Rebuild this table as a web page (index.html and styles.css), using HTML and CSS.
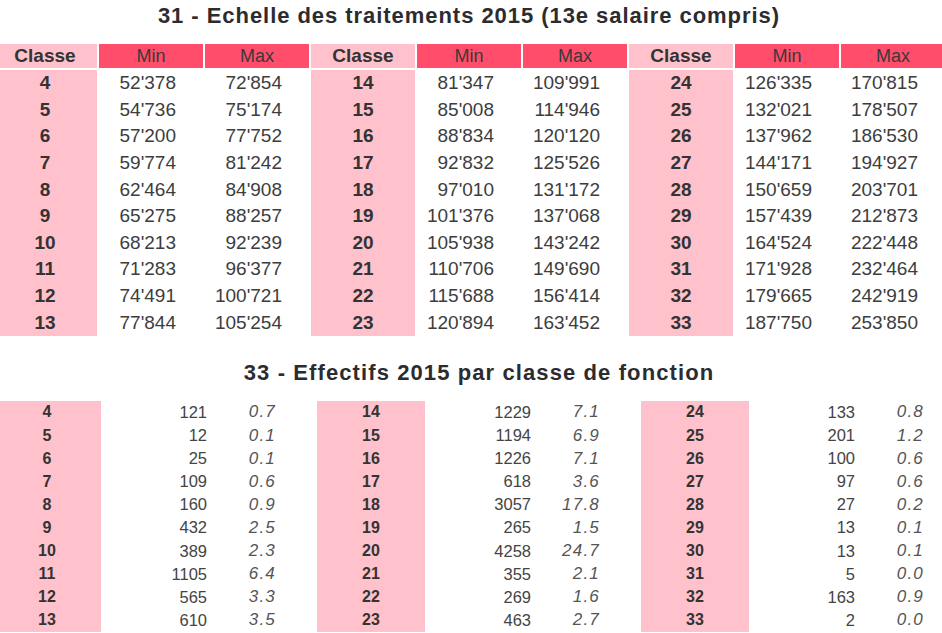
FILE: index.html
```html
<!DOCTYPE html>
<html lang="fr">
<head>
<meta charset="utf-8">
<title>Echelle des traitements 2015</title>
<link rel="stylesheet" href="styles.css">
</head>
<body>
<div class="page">
  <section class="salaires">
    <h1 class="title title-top">31 - Echelle des traitements 2015 (13e salaire compris)</h1>
    <div class="grid head">
      <div class="h-classe">Classe</div><div class="h-val">Min</div><div class="h-val">Max</div>
      <div class="h-classe">Classe</div><div class="h-val">Min</div><div class="h-val">Max</div>
      <div class="h-classe">Classe</div><div class="h-val">Min</div><div class="h-val">Max</div>
    </div>
    <div class="grid body">
      <div class="c">4</div><div class="n">52'378</div><div class="n">72'854</div><div class="c">14</div><div class="n">81'347</div><div class="n">109'991</div><div class="c">24</div><div class="n">126'335</div><div class="n">170'815</div>
      <div class="c">5</div><div class="n">54'736</div><div class="n">75'174</div><div class="c">15</div><div class="n">85'008</div><div class="n">114'946</div><div class="c">25</div><div class="n">132'021</div><div class="n">178'507</div>
      <div class="c">6</div><div class="n">57'200</div><div class="n">77'752</div><div class="c">16</div><div class="n">88'834</div><div class="n">120'120</div><div class="c">26</div><div class="n">137'962</div><div class="n">186'530</div>
      <div class="c">7</div><div class="n">59'774</div><div class="n">81'242</div><div class="c">17</div><div class="n">92'832</div><div class="n">125'526</div><div class="c">27</div><div class="n">144'171</div><div class="n">194'927</div>
      <div class="c">8</div><div class="n">62'464</div><div class="n">84'908</div><div class="c">18</div><div class="n">97'010</div><div class="n">131'172</div><div class="c">28</div><div class="n">150'659</div><div class="n">203'701</div>
      <div class="c">9</div><div class="n">65'275</div><div class="n">88'257</div><div class="c">19</div><div class="n">101'376</div><div class="n">137'068</div><div class="c">29</div><div class="n">157'439</div><div class="n">212'873</div>
      <div class="c">10</div><div class="n">68'213</div><div class="n">92'239</div><div class="c">20</div><div class="n">105'938</div><div class="n">143'242</div><div class="c">30</div><div class="n">164'524</div><div class="n">222'448</div>
      <div class="c">11</div><div class="n">71'283</div><div class="n">96'377</div><div class="c">21</div><div class="n">110'706</div><div class="n">149'690</div><div class="c">31</div><div class="n">171'928</div><div class="n">232'464</div>
      <div class="c">12</div><div class="n">74'491</div><div class="n">100'721</div><div class="c">22</div><div class="n">115'688</div><div class="n">156'414</div><div class="c">32</div><div class="n">179'665</div><div class="n">242'919</div>
      <div class="c">13</div><div class="n">77'844</div><div class="n">105'254</div><div class="c">23</div><div class="n">120'894</div><div class="n">163'452</div><div class="c">33</div><div class="n">187'750</div><div class="n">253'850</div>
    </div>
  </section>

  <section class="effectifs">
    <h2 class="title title-bottom">33 - Effectifs 2015 par classe de fonction</h2>
    <div class="eff">
      <div class="ec">4</div><div class="en">121</div><div class="ep">0.7</div><div class="ec">14</div><div class="en">1229</div><div class="ep">7.1</div><div class="ec">24</div><div class="en">133</div><div class="ep">0.8</div>
      <div class="ec">5</div><div class="en">12</div><div class="ep">0.1</div><div class="ec">15</div><div class="en">1194</div><div class="ep">6.9</div><div class="ec">25</div><div class="en">201</div><div class="ep">1.2</div>
      <div class="ec">6</div><div class="en">25</div><div class="ep">0.1</div><div class="ec">16</div><div class="en">1226</div><div class="ep">7.1</div><div class="ec">26</div><div class="en">100</div><div class="ep">0.6</div>
      <div class="ec">7</div><div class="en">109</div><div class="ep">0.6</div><div class="ec">17</div><div class="en">618</div><div class="ep">3.6</div><div class="ec">27</div><div class="en">97</div><div class="ep">0.6</div>
      <div class="ec">8</div><div class="en">160</div><div class="ep">0.9</div><div class="ec">18</div><div class="en">3057</div><div class="ep">17.8</div><div class="ec">28</div><div class="en">27</div><div class="ep">0.2</div>
      <div class="ec">9</div><div class="en">432</div><div class="ep">2.5</div><div class="ec">19</div><div class="en">265</div><div class="ep">1.5</div><div class="ec">29</div><div class="en">13</div><div class="ep">0.1</div>
      <div class="ec">10</div><div class="en">389</div><div class="ep">2.3</div><div class="ec">20</div><div class="en">4258</div><div class="ep">24.7</div><div class="ec">30</div><div class="en">13</div><div class="ep">0.1</div>
      <div class="ec">11</div><div class="en">1105</div><div class="ep">6.4</div><div class="ec">21</div><div class="en">355</div><div class="ep">2.1</div><div class="ec">31</div><div class="en">5</div><div class="ep">0.0</div>
      <div class="ec">12</div><div class="en">565</div><div class="ep">3.3</div><div class="ec">22</div><div class="en">269</div><div class="ep">1.6</div><div class="ec">32</div><div class="en">163</div><div class="ep">0.9</div>
      <div class="ec">13</div><div class="en">610</div><div class="ep">3.5</div><div class="ec">23</div><div class="en">463</div><div class="ep">2.7</div><div class="ec">33</div><div class="en">2</div><div class="ep">0.0</div>
    </div>
  </section>
</div>
</body>
</html>
```

FILE: styles.css
```css
html, body {
  margin: 0;
  padding: 0;
  overflow: hidden;
  background: #ffffff;
}

body {
  font-family: "Liberation Sans", Arial, sans-serif;
  color: #333333;
}

.page {
  margin-left: -7px;
  width: 972px;
}

.title {
  margin: 0;
  font-weight: bold;
  font-size: 22px;
  letter-spacing: 0.95px;
  height: 32px;
  line-height: 32px;
  text-align: center;
  color: #2c2c30;
}

.salaires {
  width: 952px;
}

.title-top {
  margin-bottom: 12px;
}

.grid {
  display: grid;
  grid-template-columns: repeat(9, 104px);
  column-gap: 2px;
}

.head {
  grid-template-rows: 24px;
  margin-bottom: 2px;
}

.h-classe,
.h-val {
  font-size: 18px;
  line-height: 24px;
  text-align: center;
}

.h-classe {
  background: #ffc2cc;
  font-weight: bold;
  font-size: 19px;
  color: #333333;
}

.h-val {
  background: #ff4d6b;
  color: #3a3a3a;
}

.body {
  grid-template-rows: repeat(10, 26.6px);
}

.c,
.n {
  font-size: 19px;
  display: flex;
  align-items: center;
}

.c {
  background: #ffc2cc;
  font-weight: bold;
  justify-content: center;
  color: #333333;
}

.n {
  justify-content: flex-end;
  padding-right: 27px;
  color: #3d3d3d;
}

.effectifs {
  margin-top: 21px;
}

.title-bottom {
  letter-spacing: 1.1px;
  margin-bottom: 12px;
}

.eff {
  display: grid;
  grid-template-columns: repeat(3, 108px 106px 110px);
  grid-template-rows: repeat(10, 23.1px);
}

.ec,
.en,
.ep {
  font-size: 16px;
  display: flex;
  align-items: center;
}

.ec {
  background: #ffc2cc;
  font-weight: bold;
  justify-content: center;
  color: #333333;
}

.en {
  font-size: 16.5px;
  justify-content: flex-end;
  color: #444444;
}

.ep {
  font-size: 17px;
  justify-content: flex-end;
  padding-right: 41px;
  letter-spacing: 1.2px;
  font-style: italic;
  color: #555555;
}
```
